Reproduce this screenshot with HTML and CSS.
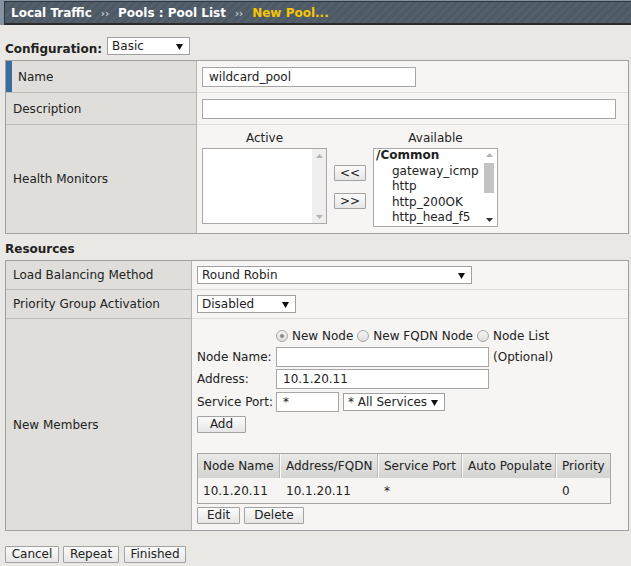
FILE: index.html
```html
<!DOCTYPE html>
<html>
<head>
<meta charset="utf-8">
<title>New Pool</title>
<link rel="stylesheet" href="styles.css">
</head>
<body>
<div class="hdr">
  <div class="bar">
    <span class="crumb">Local Traffic</span><span class="sep">››</span><span class="crumb">Pools : Pool List</span><span class="sep">››</span><span class="crumb cur">New Pool...</span>
  </div>
</div>

<div class="config">
  <span class="cfg-label">Configuration:</span>
  <div class="sel sel-basic"><span>Basic</span><svg class="tri" width="7" height="7" viewBox="0 0 7 7"><polygon points="0,1 7,1 3.5,7"/></svg></div>
</div>

<div class="panel p1">
  <div class="lab lab-name">Name</div>
  <div class="val"><input class="inp inp-name" type="text" value="wildcard_pool"></div>
  <div class="lab">Description</div>
  <div class="val"><input class="inp inp-desc" type="text" value=""></div>
  <div class="lab last">Health Monitors</div>
  <div class="val last hm">
    <div class="hm-col">
      <div class="hm-title">Active</div>
      <div class="list list-active">
        <div class="items"></div>
        <div class="sb sb-grey">
          <svg width="7" height="4" viewBox="0 0 7 4"><polygon points="0,4 3.5,0 7,4"/></svg>
          <svg width="7" height="4" viewBox="0 0 7 4"><polygon points="0,0 7,0 3.5,4"/></svg>
        </div>
      </div>
    </div>
    <div class="arrows">
      <button class="btn btn-arrow">&lt;&lt;</button>
      <button class="btn btn-arrow">&gt;&gt;</button>
    </div>
    <div class="hm-col">
      <div class="hm-title">Available</div>
      <div class="list list-avail">
        <div class="items">
          <div class="it grp">/Common</div>
          <div class="it sub">gateway_icmp</div>
          <div class="it sub">http</div>
          <div class="it sub">http_200OK</div>
          <div class="it sub">http_head_f5</div>
        </div>
        <div class="sb sb-white">
          <div class="arr"><svg width="7" height="4" viewBox="0 0 7 4"><polygon points="0,4 3.5,0 7,4"/></svg></div>
          <div class="thumb"></div>
          <div class="fill"></div>
          <div class="arr"><svg class="dark" width="7" height="4" viewBox="0 0 7 4"><polygon points="0,0 7,0 3.5,4"/></svg></div>
        </div>
      </div>
    </div>
  </div>
</div>

<div class="section">Resources</div>

<div class="panel p2">
  <div class="lab">Load Balancing Method</div>
  <div class="val"><div class="sel sel-lbm"><span>Round Robin</span><svg class="tri" width="7" height="7" viewBox="0 0 7 7"><polygon points="0,1 7,1 3.5,7"/></svg></div></div>
  <div class="lab">Priority Group Activation</div>
  <div class="val"><div class="sel sel-pga"><span>Disabled</span><svg class="tri" width="7" height="7" viewBox="0 0 7 7"><polygon points="0,1 7,1 3.5,7"/></svg></div></div>
  <div class="lab last">New Members</div>
  <div class="val last nm">
    <div class="radios">
      <span class="radio on"></span><span class="rtxt">New Node</span>
      <span class="radio"></span><span class="rtxt">New FQDN Node</span>
      <span class="radio"></span><span class="rtxt">Node List</span>
    </div>
    <div class="frow r-name">
      <span class="flab">Node Name:</span>
      <input class="inp inp-long" type="text" value="">
      <span class="opt">(Optional)</span>
    </div>
    <div class="frow r-addr">
      <span class="flab">Address:</span>
      <input class="inp inp-long" type="text" value="10.1.20.11">
    </div>
    <div class="frow r-port">
      <span class="flab">Service Port:</span>
      <input class="inp inp-port" type="text" value="*">
      <div class="sel sel-svc"><span>* All Services</span><svg class="tri" width="7" height="7" viewBox="0 0 7 7"><polygon points="0,1 7,1 3.5,7"/></svg></div>
    </div>
    <div class="addrow"><button class="btn btn-add">Add</button></div>
    <table class="members">
      <colgroup><col class="c1"><col class="c2"><col class="c3"><col class="c4"><col class="c5"></colgroup>
      <thead>
        <tr><th>Node Name</th><th>Address/FQDN</th><th>Service Port</th><th>Auto Populate</th><th class="lastc">Priority</th></tr>
      </thead>
      <tbody>
        <tr><td>10.1.20.11</td><td>10.1.20.11</td><td>*</td><td></td><td>0</td></tr>
      </tbody>
    </table>
    <div class="editrow">
      <button class="btn btn-edit">Edit</button>
      <button class="btn btn-edit">Delete</button>
    </div>
  </div>
</div>

<div class="actions">
  <button class="btn btn-act w-cancel">Cancel</button>
  <button class="btn btn-act w-repeat">Repeat</button>
  <button class="btn btn-act w-finish">Finished</button>
</div>
</body>
</html>
```

FILE: styles.css
```css
html, body {
  margin: 0;
  padding: 0;
}
body {
  background: #e9e8e4;
  font-family: "DejaVu Sans", sans-serif;
  font-size: 12px;
  color: #222;
  width: 631px;
  height: 566px;
  overflow: hidden;
}

/* header */
.hdr {
  background: #8592a1;
  padding: 1px 0 0 4px;
}
.bar {
  height: 21px;
  border-top: 1px solid #2f363d;
  border-left: 1px solid #2f363d;
  border-bottom: 2px solid #2a2a2a;
  background: repeating-linear-gradient(135deg, #4e5966 0 3px, #545f6c 3px 6px);
  display: flex;
  align-items: center;
  padding-left: 6px;
  font-weight: bold;
  color: #fff;
  font-size: 12px;
  white-space: nowrap;
}
.sep {
  font-size: 10px;
  color: #c5cbd2;
  margin: 1px 9px 0 9px;
}
.cur {
  color: #f7c600;
}

/* configuration row */
.config {
  display: flex;
  align-items: flex-end;
  margin: 12px 0 0 5px;
  height: 18px;
}
.cfg-label {
  font-weight: bold;
  line-height: 12px;
}
.sel {
  box-sizing: border-box;
  height: 18px;
  border: 1px solid #a0a0a0;
  background: #fff;
  display: flex;
  align-items: center;
  justify-content: space-between;
  padding: 0 6px 0 4px;
  line-height: 16px;
  white-space: nowrap;
}
.tri polygon { fill: #111; }
.sel-basic { width: 83px; margin-left: 5px; }
.sel-lbm { width: 275px; }
.sel-pga { width: 99px; }
.sel-svc { width: 102px; margin-left: 4px; padding-left: 4px; }

/* panels */
.panel {
  box-sizing: border-box;
  width: 624px;
  margin-left: 5px;
  border: 1px solid #a0a0a0;
  display: grid;
  background: #f6f5f3;
}
.p1 {
  margin-top: 5px;
  grid-template-columns: 191px 1fr;
  grid-template-rows: 32px 32px 108px;
}
.p2 {
  grid-template-columns: 186px 1fr;
  grid-template-rows: 29px 29px 211px;
}
.lab {
  box-sizing: border-box;
  background: #dfdedb;
  border-right: 1px solid #b3b3b3;
  border-bottom: 1px solid #bcbcbc;
  display: flex;
  align-items: center;
  padding-left: 7px;
}
.lab-name {
  padding-left: 12px;
  box-shadow: inset 6px 0 0 #3a6b9e;
}
.val {
  box-sizing: border-box;
  border-bottom: 1px solid #dddcda;
  display: flex;
  align-items: center;
  padding-left: 5px;
}
.last { border-bottom: none; }

.inp {
  box-sizing: border-box;
  height: 20px;
  border: 1px solid #a6a6a6;
  background: #fff;
  font-family: "DejaVu Sans", sans-serif;
  font-size: 12px;
  color: #222;
  padding: 0 6px;
  margin: 0;
  outline: none;
  border-radius: 0;
}
.inp-name { width: 214px; }
.inp-desc { width: 414px; }
.inp-long { width: 213px; }
.inp-port { width: 63px; }

/* health monitors */
.hm {
  align-items: flex-start;
  padding-top: 5px;
}
.hm-col {
  display: flex;
  flex-direction: column;
  align-items: center;
  width: 125px;
}
.hm-title {
  line-height: 16px;
  margin-bottom: 2px;
}
.list {
  box-sizing: border-box;
  width: 125px;
  border: 1px solid #a8a8a8;
  background: #fff;
  display: flex;
}
.list-active { height: 76px; }
.list-avail { height: 79px; }
.items { flex: 1; overflow: hidden; }
.sb {
  display: flex;
  flex-direction: column;
  align-items: center;
}
.sb polygon { fill: #b4b4b4; }
.sb .dark polygon { fill: #333; }
.sb-grey {
  width: 14px;
  background: #efefef;
  justify-content: space-between;
  padding: 5px 0 4px;
}
.sb-white {
  width: 12px;
  margin-right: 2px;
}
.arr {
  height: 12px;
  display: flex;
  align-items: center;
  justify-content: center;
}
.thumb {
  width: 10px;
  height: 30px;
  margin-top: 2px;
  background: #c3c3c3;
}
.fill { flex: 1; }
.it {
  line-height: 15.5px;
  white-space: nowrap;
}
.grp {
  font-weight: bold;
  padding-left: 2px;
  margin-top: -1px;
}
.sub { padding-left: 18px; }

.arrows {
  display: flex;
  flex-direction: column;
  gap: 12px;
  margin: 35px 7px 0;
}

/* buttons */
.btn {
  box-sizing: border-box;
  height: 17px;
  border: 1px solid #a2a2a2;
  border-radius: 1px;
  background: linear-gradient(#fbfbfb, #e6e6e6);
  font-family: "DejaVu Sans", sans-serif;
  font-size: 12px;
  color: #222;
  line-height: 15px;
  padding: 0;
  margin: 0;
  text-align: center;
}
.btn-arrow { width: 32px; height: 16px; line-height: 14px; }
.btn-add { width: 49px; }
.btn-edit { padding: 0 9px; }

/* resources */
.section {
  font-weight: bold;
  margin: 7px 0 3px 5px;
  line-height: 16px;
}

/* new members */
.nm {
  flex-direction: column;
  align-items: flex-start;
  justify-content: flex-start;
  padding-top: 9px;
}
.radios {
  margin-left: 79px;
  height: 16px;
  display: flex;
  align-items: center;
  gap: 4px;
}
.rtxt { margin-right: 0; }
.radio {
  box-sizing: border-box;
  width: 12px;
  height: 12px;
  border-radius: 50%;
  border: 1px solid #a8a8a8;
  background: linear-gradient(#f4f4f4, #dedede);
  display: flex;
  align-items: center;
  justify-content: center;
}
.radio.on::after {
  content: "";
  width: 4px;
  height: 4px;
  border-radius: 50%;
  background: #8a8a8a;
}
.frow {
  display: flex;
  align-items: center;
}
.flab { width: 79px; white-space: nowrap; }
.opt { margin-left: 4px; }
.r-name { margin-top: 3px; }
.r-addr { margin-top: 2px; }
.r-port { margin-top: 3px; }
.addrow { margin-top: 4px; }

.members {
  margin-top: 20px;
  border-collapse: separate;
  border-spacing: 0;
  border: 1px solid #a6a6a6;
  table-layout: fixed;
  width: 414px;
}
.c1 { width: 83px; }
.c2 { width: 98px; }
.c3 { width: 84px; }
.c4 { width: 94px; }
.c5 { width: 53px; }
.members th {
  height: 24px;
  box-sizing: border-box;
  background: linear-gradient(#e9e9e7, #d3d3d1);
  border-right: 1px solid #fbfbfb;
  box-shadow: inset -1px 0 0 #b9b9b9;
  font-weight: normal;
  text-align: left;
  padding: 0 0 0 5px;
  white-space: nowrap;
}
.members th.lastc { border-right: none; box-shadow: none; }
.members td {
  height: 25px;
  box-sizing: border-box;
  padding: 0 0 0 5px;
  white-space: nowrap;
}
.editrow {
  margin-top: 3px;
  display: flex;
  gap: 4px;
}

/* bottom actions */
.actions {
  margin: 15px 0 0 5px;
  display: flex;
  gap: 4px;
}
.w-cancel { width: 54px; }
.w-repeat { width: 56px; }
.w-finish { width: 62px; margin-left: 1px; }
```
